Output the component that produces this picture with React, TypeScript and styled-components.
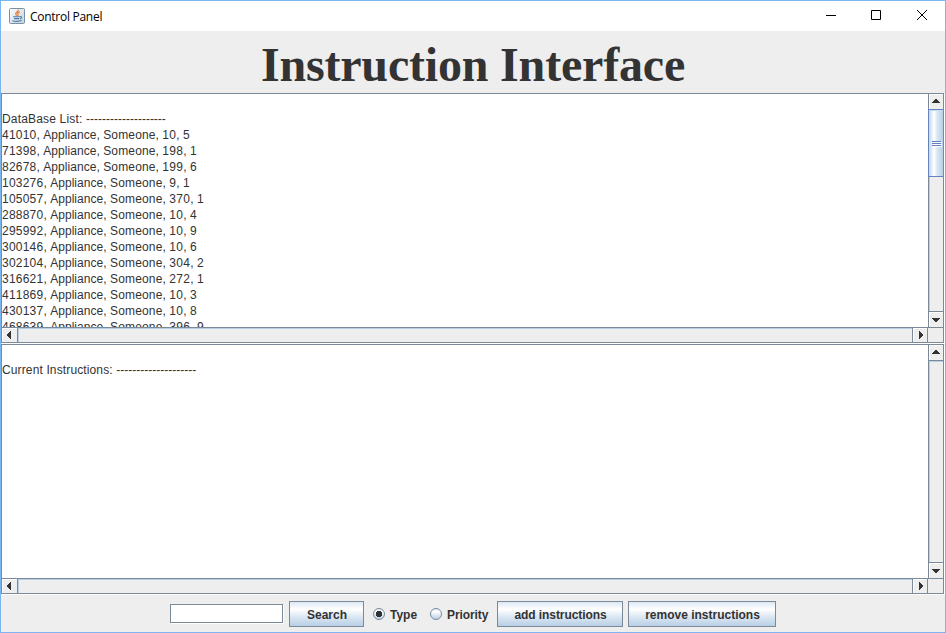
import React from "react";
import styled, { createGlobalStyle } from "styled-components";

const line = "#7a8a99";
const sans = `"Liberation Sans", Arial, sans-serif`;

const GlobalStyle = createGlobalStyle`
  * { box-sizing: border-box; }
  body { margin: 0; overflow: hidden; }
  svg { display: block; flex: none; }
`;

const Window = styled.div`
  width: 946px;
  height: 633px;
  display: flex;
  flex-direction: column;
  border: 1px solid #7ab6f1;
  background: #eeeeee;
  color: #333333;
  font: 12px/16px ${sans};
`;

const TitleBar = styled.header`
  height: 30px;
  flex: none;
  display: flex;
  align-items: center;
  padding: 0 0 0 8px;
  background: #ffffff;
`;

const WindowTitle = styled.span`
  flex: 1;
  margin-left: 5px;
  padding-top: 1px;
  color: #000000;
  font: 12px/16px "Open Sans", "Noto Sans", sans-serif;
  letter-spacing: -0.27px;
`;

const WindowButton = styled.button`
  width: 46px;
  height: 30px;
  border: 0;
  padding: 0 0 2px;
  background: none;
  display: flex;
  align-items: center;
  justify-content: center;
  &:nth-last-child(3) { width: 44px; }
`;

const Heading = styled.h1`
  height: 62px;
  flex: none;
  margin: 0;
  text-align: center;
  font: bold 48px/68px "Liberation Serif", "Times New Roman", serif;
  letter-spacing: -0.18px;
  white-space: nowrap;
`;

const ScrollPane = styled.section`
  height: 250px;
  flex: none;
  display: grid;
  grid-template: 233px 15px / 926px 15px;
  border: 1px solid ${line};
  margin: 0 1px 1px 0;
  box-shadow: 1px 1px 0 #ffffff;
`;

const TextArea = styled.div`
  overflow: hidden;
  background: #ffffff;
  padding-top: 17px;
  font-kerning: none;
`;

const TextLine = styled.div`
  height: 16px;
  white-space: pre;
`;

const Run = styled.span<{ $spacing: number }>`
  letter-spacing: ${(p) => p.$spacing}px;
`;

const VerticalBar = styled.div`
  display: flex;
  flex-direction: column;
  border-left: 1px solid ${line};
`;

const HorizontalBar = styled.div`
  display: flex;
  border-top: 1px solid ${line};
`;

type Direction = "up" | "down" | "left" | "right";

const arrowPadding: Record<Direction, string> = {
  up: "0 0 1px",
  down: "1px 0 0",
  left: "0 1px 0 0",
  right: "0",
};

const ArrowButton = styled.button<{ $direction: Direction }>`
  flex: none;
  width: ${(p) => (p.$direction === "left" || p.$direction === "right" ? 15 : 14)}px;
  height: ${(p) => (p.$direction === "left" || p.$direction === "right" ? 14 : 15)}px;
  border: 0;
  padding: ${(p) => arrowPadding[p.$direction]};
  background: #eeeeee;
  box-shadow: inset 1px 1px 0 #ffffff;
  display: flex;
  align-items: center;
  justify-content: center;
`;

const Track = styled.div<{ $axis: "x" | "y" }>`
  flex: 1;
  min-width: 0;
  border: solid ${line};
  border-width: ${(p) => (p.$axis === "x" ? "0 1px" : "1px 0")};
  box-shadow: inset 1px 1px 0 #b8cfe5;
`;

const Thumb = styled.div`
  height: 68px;
  margin: -1px 0 0 -1px;
  border: 1px solid #6382bf;
  border-right: 0;
  background: linear-gradient(90deg, #c8ddf2 0 1px, #dbe8f3 2px, #ffffff 5px, #dce8f3 8px, #b8cfe5);
  box-shadow: inset 0 1px 0 #c8ddf2;
  display: flex;
  flex-direction: column;
  gap: 1px;
  align-items: center;
  justify-content: center;
`;

const Grip = styled.i`
  width: 9px;
  height: 1px;
  background: #6382bf;
  box-shadow: 1px 1px 0 #ffffff;
`;

const Corner = styled.div`
  border: solid ${line};
  border-width: 1px 0 0 1px;
  margin-left: -1px;
`;

const Controls = styled.footer`
  flex: 1;
  display: flex;
  align-items: flex-start;
  padding: 6px 0 0 169px;
  font-weight: bold;
`;

const SearchField = styled.input`
  width: 113px;
  height: 19px;
  margin: 3px 6px 0 0;
  padding: 0 2px;
  border: 1px solid ${line};
  box-shadow: 1px 1px 0 #ffffff;
  background: #ffffff;
  border-radius: 0;
  outline: 0;
`;

const Button = styled.button<{ $width: number; $spacing?: number }>`
  width: ${(p) => p.$width}px;
  height: 26px;
  margin-right: 5px;
  padding: 1px 0 0 1px;
  border: 1px solid ${line};
  background: linear-gradient(#dde8f3, #ffffff 30%, #dde8f3 60%, #b8cfe5);
  color: #333333;
  font: bold 12px/16px ${sans};
  letter-spacing: ${(p) => p.$spacing ?? 0}px;
  white-space: nowrap;
`;

const RadioLabel = styled.label<{ $width: number; $spacing?: number }>`
  width: ${(p) => p.$width}px;
  height: 26px;
  padding: 0 0 0 4px;
  display: flex;
  align-items: center;
  gap: 5px;
  letter-spacing: ${(p) => p.$spacing ?? 0}px;
`;

const RadioText = styled.span`
  padding-top: 1px;
`;

const arrowPaths: Record<Direction, string> = {
  up: "M4 0h2v1h1v1h1v1h1v1H1V3h1V2h1V1h1z",
  down: "M1 0h8v1H8v1H7v1H6v1H4V3H3V2H2V1H1z",
  left: "M4 0v8H3V7H2V6H1V5H0V3h1V2h1V1h1V0z",
  right: "M0 0h1v1h1v1h1v1h1v2H3v1H2v1H1v1H0z",
};

function ScrollArrow({ direction }: { direction: Direction }) {
  const horizontal = direction === "left" || direction === "right";
  return (
    <ArrowButton $direction={direction} aria-label={`Scroll ${direction}`}>
      <svg width={horizontal ? 4 : 10} height={horizontal ? 8 : 4} shapeRendering="crispEdges">
        <path d={arrowPaths[direction]} fill="#333333" />
      </svg>
    </ArrowButton>
  );
}

function JavaIcon() {
  return (
    <svg width="16" height="16" viewBox="0 0 16 16" fill="none">
      <defs>
        <linearGradient id="tile" x2="1" y2="1">
          <stop stopColor="#fbfcfd" />
          <stop offset="1" stopColor="#c4d1dc" />
        </linearGradient>
      </defs>
      <rect x=".5" y=".5" width="15" height="15" rx="1" fill="url(#tile)" stroke="#7890a4" />
      <path d="M9.2 1.8c1 2-3.3 2.5-2.4 4.4.3.7 1 1 .8 1.6M10.8 3.8C8.5 4.9 8.3 5.5 9 6.4c.3.5 0 .9-.4 1.4" stroke="#e8782b" strokeWidth="1.2" />
      <path d="M4.2 8.8h6.4M5 10.6h5M3.3 12.6c1.5 1 7.4 1 9.2 0M10.8 8.7c2.4-.3 2.2 1.7 0 2.2" stroke="#4b7ca8" strokeWidth="1.1" />
    </svg>
  );
}

function RadioDot({ selected, id }: { selected?: boolean; id: string }) {
  return (
    <svg width="12" height="12" viewBox="0 0 12 12">
      <defs>
        <linearGradient id={id} x2="0" y2="1">
          <stop stopColor="#dde8f3" />
          <stop offset=".3" stopColor="#fff" />
          <stop offset=".6" stopColor="#dde8f3" />
          <stop offset="1" stopColor="#b8cfe5" />
        </linearGradient>
      </defs>
      <circle cx="6" cy="6" r="5.5" fill={`url(#${id})`} stroke="#7a8a99" />
      {selected && <path d="M4 3h4v1h1v4H8v1H4V8H3V4h1z" fill="#333" shapeRendering="crispEdges" />}
    </svg>
  );
}

function Pane({ children, scrollable }: { children: React.ReactNode; scrollable?: boolean }) {
  return (
    <ScrollPane>
      <TextArea>{children}</TextArea>
      <VerticalBar>
        <ScrollArrow direction="up" />
        <Track $axis="y">
          {scrollable && <Thumb><Grip /><Grip /><Grip /></Thumb>}
        </Track>
        <ScrollArrow direction="down" />
      </VerticalBar>
      <HorizontalBar>
        <ScrollArrow direction="left" />
        <Track $axis="x" />
        <ScrollArrow direction="right" />
      </HorizontalBar>
      <Corner />
    </ScrollPane>
  );
}

const dashes = "-".repeat(20);

const database: [number, number, number][] = [
  [41010, 10, 5],
  [71398, 198, 1],
  [82678, 199, 6],
  [103276, 9, 1],
  [105057, 370, 1],
  [288870, 10, 4],
  [295992, 10, 9],
  [300146, 10, 6],
  [302104, 304, 2],
  [316621, 272, 1],
  [411869, 10, 3],
  [430137, 10, 8],
  [468639, 396, 9],
];

export default function App() {
  return (
    <>
      <GlobalStyle />
      <Window>
        <TitleBar>
          <JavaIcon />
          <WindowTitle>Control Panel</WindowTitle>
          <WindowButton aria-label="Minimize">
            <svg width="10" height="10"><path d="M0 5h10v1H0z" /></svg>
          </WindowButton>
          <WindowButton aria-label="Maximize">
            <svg width="10" height="10"><path d="M.5.5h9v9h-9z" fill="none" stroke="#000" /></svg>
          </WindowButton>
          <WindowButton aria-label="Close">
            <svg width="10" height="10"><path d="M0 0l10 10M10 0L0 10" stroke="#000" /></svg>
          </WindowButton>
        </TitleBar>
        <Heading>Instruction Interface</Heading>
        <Pane scrollable>
          <TextLine><Run $spacing={0.17}>DataBase List: </Run>{dashes}</TextLine>
          {database.map(([id, amount, priority]) => (
            <TextLine key={id}>
              <Run $spacing={0.22}>{id}</Run>
              <Run $spacing={0.05}>, Appliance, </Run>
              <Run $spacing={0.15}>Someone</Run>,{" "}
              <Run $spacing={0.33}>{amount}</Run>,{" "}
              <Run $spacing={0.33}>{priority}</Run>
            </TextLine>
          ))}
        </Pane>
        <Pane>
          <TextLine><Run $spacing={0.13}>Current Instructions: </Run>{dashes}</TextLine>
        </Pane>
        <Controls>
          <SearchField aria-label="Search text" />
          <Button $width={75}>Search</Button>
          <RadioLabel $width={57}><RadioDot id="type" selected /><RadioText>Type</RadioText></RadioLabel>
          <RadioLabel $width={71} $spacing={-0.1}><RadioDot id="priority" /><RadioText>Priority</RadioText></RadioLabel>
          <Button $width={126} $spacing={-0.08}>add instructions</Button>
          <Button $width={148}>remove instructions</Button>
        </Controls>
      </Window>
    </>
  );
}
